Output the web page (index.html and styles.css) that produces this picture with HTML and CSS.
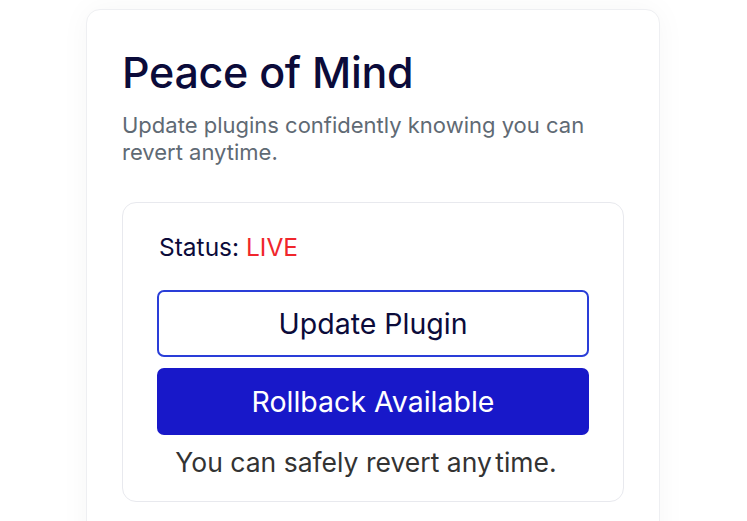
FILE: index.html
```html
<!DOCTYPE html>
<html lang="en">
<head>
<meta charset="utf-8">
<title>Peace of Mind</title>
<link rel="stylesheet" href="styles.css">
</head>
<body>
<div class="page">
  <section class="card">
    <h1 class="title">Peace of Mind</h1>
    <p class="subtitle">Update plugins confidently knowing you can revert anytime.</p>
    <div class="panel">
      <p class="status">Status: <span class="live">LIVE</span></p>
      <button class="btn btn-outline">Update Plugin</button>
      <button class="btn btn-solid">Rollback Available</button>
      <p class="note">You can safely revert <span class="tight">any time.</span></p>
    </div>
  </section>
</div>
</body>
</html>
```
FILE: styles.css
```css
* { box-sizing: border-box; }
html, body { margin: 0; padding: 0; background: #ffffff; }
body { font-family: Inter, "Noto Sans", sans-serif; }
.page {
  display: flex;
  justify-content: flex-start;
  padding: 9px 0 0 86px;
  height: 521px;
  overflow: hidden;
}
.card {
  width: 574px;
  height: 560px;
  flex: none;
  background: #fff;
  border: 1px solid #eeeff2;
  border-radius: 14px;
  box-shadow: 0 0 30px rgba(20, 20, 60, 0.04);
  padding: 36px 35px 0 35px;
}
.title {
  margin: 0;
  font-size: 43px;
  font-weight: 500;
  line-height: 52px;
  color: #0b0b3a;
  letter-spacing: -0.3px;
}
.subtitle {
  margin: 14px 0 0 0;
  font-size: 22px;
  line-height: 27px;
  color: #5f6a74;
  max-width: 490px;
}
.panel {
  margin-top: 36px;
  border: 1px solid #e8e9ee;
  border-radius: 14px;
  padding: 28px 34px 22px 34px;
  display: flex;
  flex-direction: column;
}
.status {
  margin: 0 0 27px 2px;
  font-size: 24.5px;
  line-height: 32px;
  color: #0b0b3a;
}
.live { color: #f0262c; }
.btn {
  font-family: inherit;
  font-size: 28.5px;
  height: 67px;
  border-radius: 7px;
  cursor: pointer;
  width: 100%;
}
.btn-outline {
  background: #fff;
  border: 2px solid #2a3ed8;
  color: #0b0b3a;
}
.btn-solid {
  margin-top: 11px;
  background: #1818c9;
  border: none;
  color: #fff;
}
.note {
  margin: 10px 0 0 0;
  padding-right: 14px;
  text-align: center;
  font-size: 26.5px;
  line-height: 34px;
  color: #333333;
}
.tight { word-spacing: -4px; }
```
